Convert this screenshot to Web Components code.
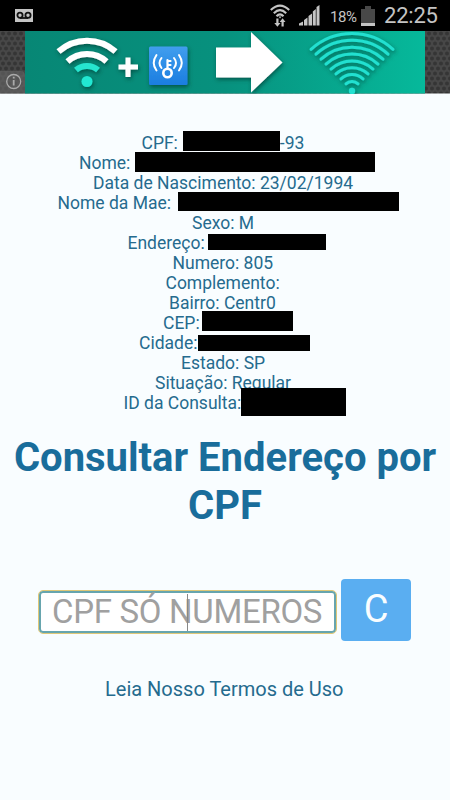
<!DOCTYPE html>
<html lang="pt-BR">
<head>
<meta charset="utf-8">
<meta name="viewport" content="width=device-width, initial-scale=1">
<title>Consultar Endereço por CPF</title>
<style>
    body {
        margin: 0;
        background: #f9fdff;
        font-family: Roboto, "Liberation Sans", sans-serif;
        color: #256b8e;
    }
</style>
</head>
<body>
<consulta-app></consulta-app>

<script>
// Barra de status do telefone
customElements.define('status-bar', class extends HTMLElement {
    connectedCallback() {
        this.attachShadow({mode: 'open'});
        this.shadowRoot.innerHTML = `
        <style>
            :host {
                display: flex;
                align-items: center;
                box-sizing: border-box;
                height: 31px;
                padding: 0 12px 0 15px;
                background: #000;
                color: #c4c4c4;
            }
            svg { display: block; }
            .espaco { flex: 1; }
            .wifi { margin-right: 9px; }
            .sinal { margin-right: 10px; }
            .carga { font-size: 15px; letter-spacing: -.4px; padding-top: 2px; width: 27px; margin-right: 4px; white-space: nowrap; }
            .bateria { margin-right: 9px; }
            .hora { font-size: 22px; width: 54px; letter-spacing: -.2px; white-space: nowrap; }
        </style>
        <svg width="18" height="13" viewBox="0 0 18 13">
            <path fill="#c4c4c4" d="M0 0h18v13H0z"/>
            <g fill="none" stroke="#111" stroke-width="1.8">
                <circle cx="5" cy="6.3" r="2.6"/><circle cx="13" cy="6.3" r="2.6"/>
                <path d="M5 9h8"/>
            </g>
        </svg>
        <span class="espaco"></span>
        <svg class="wifi" width="20" height="23" viewBox="0 0 20 23">
            <g fill="none" stroke="#c4c4c4" stroke-width="2.1">
                <path d="M.8 6Q10-2.8 19.200 6M3.800 9.300Q10 3 16.200 9.300M6.500 12.300Q10 8.500 13.500 12.300"/>
            </g>
            <path fill="#c4c4c4" d="M8.500 12.500h3L10 14.500zM6.300 14.500h2.200v4.500h2L7.400 22.800 4.300 19h2zM11.500 22.500v-4.500H9.700l2.900-3.700 2.900 3.700h-1.800v4.500z"/>
        </svg>
        <svg class="sinal" width="21" height="21" viewBox="0 0 21 21">
            <path fill="#c4c4c4" d="M0 20.500v-2l4-2v4zM5 20.500v-5.500l3.500-2.500v8zM9.500 20.500V11l3.500-2.500v12zM13.800 20.500V6.500l3-2.500v16.500zM17.500 20.500V2l3-2v20.500z"/>
        </svg>
        <span class="carga">18%</span>
        <svg class="bateria" width="14" height="20" viewBox="0 0 14 20">
            <path fill="#484848" d="M4 0h6v3h4v17H0V3h4z"/>
            <path fill="#c4c4c4" d="M0 17h14v3H0z"/>
        </svg>
        <span class="hora">22:25</span>`;
    }
});

// Banner do anuncio
customElements.define('wifi-banner', class extends HTMLElement {
    connectedCallback() {
        this.attachShadow({mode: 'open'});
        // oito arcos, do maior para o menor
        let arcos = '';
        for (let i = 0; i < 8; i++) {
            const meio = 41 - i * 5;
            const y = 18.300 + i * 4.930;
            const topo = 2.500 + i * 6.850;
            const s = y - topo;
            const r = (meio * meio + s * s) / (2 * s);
            arcos += `<path d="M${352 - meio} ${y}A${r} ${r} 0 0 1 ${352 + meio} ${y}"/>`;
        }
        this.shadowRoot.innerHTML = `
        <style>
            :host { display: block; height: 62px; }
            svg { display: block; }
        </style>
        <svg width="450" height="63" viewBox="0 0 450 63">
            <defs>
                <pattern id="malha" width="6" height="10" patternUnits="userSpaceOnUse">
                    <path fill="#474747" d="M0 0h6v10H0z"/>
                    <g fill="#353535"><circle cx="3" cy="2.500" r="2"/><circle cx="0" cy="7.500" r="2"/><circle cx="6" cy="7.500" r="2"/></g>
                </pattern>
                <linearGradient id="verde">
                    <stop offset="0" stop-color="#078775"/>
                    <stop offset=".5" stop-color="#07917e"/>
                    <stop offset="1" stop-color="#06b99b"/>
                </linearGradient>
                <linearGradient id="azul" x2="0" y2="1">
                    <stop offset="0" stop-color="#409eee"/>
                    <stop offset="1" stop-color="#1b7de0"/>
                </linearGradient>
                <filter id="sombra" x="-20%" y="-20%" width="140%" height="150%">
                    <feDropShadow dx="1" dy="2" stdDeviation="2" flood-color="#003c36" flood-opacity=".7"/>
                </filter>
            </defs>
            <path fill="url(#malha)" d="M0 0h450v62.500H0z"/>
            <path fill="url(#verde)" d="M25 0h400v62.500H25z"/>
            <path fill="#666" fill-opacity=".65" d="M0 40h20q5 0 5 5v17.500H0z"/>
            <g fill="none" stroke="#aaa" stroke-width="1.300">
                <circle cx="13.700" cy="50.500" r="7"/><path stroke-width="1.800" d="M13.700 49v5.500M13.700 45.800v1.800"/>
            </g>
            <g filter="url(#sombra)">
                <g fill="none" stroke="#fff" stroke-width="6">
                    <path d="M58.500 20.500A43 43 0 0 1 115.500 20.500"/>
                    <path d="M67.500 30.500A29 29 0 0 1 106.500 30.500"/>
                    <path stroke="#27e5cf" d="M76 39A17 17 0 0 1 98 39"/>
                </g>
                <circle cx="87" cy="50.500" r="5.500" fill="#20e8d2"/>
                <path fill="#fff" d="M125.500 26.500h5v7h7.500v5h-7.500v7.500h-5V38.500h-7v-5h7z"/>
            </g>
            <g filter="url(#sombra)"><rect x="149" y="15.500" width="38.500" height="38.500" rx="1.500" fill="url(#azul)"/></g>
            <g fill="none" stroke="#fff" stroke-width="2" stroke-linecap="round">
                <circle cx="167.500" cy="42" r="4.200" stroke-width="2.600"/>
                <path stroke-width="2.200" d="M167.500 37V29M168 30h2.500M168 34h2.500"/>
                <path d="M161.500 27q-4 5 0 10M156.500 24q-5.500 8 0 15.500M174 27q4 5 0 10M179 24q5.500 8 0 15.500"/>
            </g>
            <g filter="url(#sombra)"><path fill="#fff" d="M216 16.500h35V1l31.500 30.500L251 61.500V46.500h-35z"/></g>
            <g filter="url(#sombra)">
                <g fill="none" stroke="#21e0d0" stroke-width="3" stroke-linecap="round">${arcos}</g>
                <circle cx="352" cy="60" r="3.200" fill="#21e0d0"/>
            </g>
        </svg>`;
    }
});

// Uma linha do resultado. "x" e onde o texto comeca, "vao" o espaco antes do fim
// e "tarja" (x y largura altura) cobre o valor oculto, em relacao a linha
customElements.define('dado-linha', class extends HTMLElement {
    connectedCallback() {
        const x = this.getAttribute('x');
        const tarja = this.getAttribute('tarja');
        this.attachShadow({mode: 'open'});
        this.shadowRoot.innerHTML = `
        <style>
            :host {
                display: flex;
                position: relative;
                height: 20px;
                line-height: 20px;
                font-size: 17.500px;
                padding-left: ${x}px;
                white-space: pre;
            }
            .tarja { position: absolute; background: #000; }
            ::slotted([slot="fim"]) { margin-left: ${this.getAttribute('vao') || 0}px; }
        </style>
        <slot></slot>
        <slot name="fim"></slot>`;
        if (tarja) {
            const [l, t, w, h] = tarja.split(' ');
            const div = document.createElement('div');
            div.className = 'tarja';
            div.style.cssText = `left:${l}px;top:${t}px;width:${w}px;height:${h}px`;
            this.shadowRoot.appendChild(div);
        }
    }
});

// Campo do CPF com o cursor
customElements.define('cpf-campo', class extends HTMLElement {
    connectedCallback() {
        this.attachShadow({mode: 'open'});
        this.shadowRoot.innerHTML = `
        <style>
            :host {
                display: block;
                position: relative;
                box-sizing: border-box;
                width: 297px;
                height: 42px;
                border: 2px solid #67a5ae;
                border-radius: 4px;
                outline: 1px solid #dfc878;
                background: #fff;
                color: #a0a0a0;
                font-size: 33px;
                letter-spacing: -.3px;
                line-height: 37px;
                padding-left: 11px;
                white-space: nowrap;
            }
            .cursor { position: absolute; left: 146px; top: 1px; width: 1px; height: 37px; background: #888; }
        </style>
        <slot></slot><div class="cursor"></div>`;
    }
});

customElements.define('botao-consulta', class extends HTMLElement {
    connectedCallback() {
        this.attachShadow({mode: 'open'});
        this.shadowRoot.innerHTML = `
        <style>
            :host {
                display: flex;
                align-items: center;
                justify-content: center;
                box-sizing: border-box;
                width: 70px;
                height: 62px;
                padding-bottom: 2px;
                border-radius: 4px;
                background: #5aaef1;
                color: #f9fdff;
                font-size: 38px;
            }
        </style>
        <slot></slot>`;
    }
});

customElements.define('consulta-app', class extends HTMLElement {
    connectedCallback() {
        this.attachShadow({mode: 'open'});
        this.shadowRoot.innerHTML = `
        <style>
            :host { display: block; height: 800px; overflow: hidden; }
            .dados { padding-top: 40px; }
            h1 {
                margin: 21px 0 0;
                font-size: 40px;
                line-height: 48px;
                font-weight: 700;
                color: #196d9b;
                text-align: center;
                white-space: nowrap;
            }
            form { display: flex; align-items: center; gap: 5px; margin: 49px 0 0 39px; }
            cpf-campo { margin-top: 4px; }
            .termos { margin: 36px 0 0 105px; font-size: 20px; line-height: 24px; white-space: nowrap; }
        </style>
        <status-bar></status-bar>
        <wifi-banner></wifi-banner>
        <div class="dados">
            <dado-linha x="141.500" vao="102" tarja="183 -2 97 20"><span>CPF:</span><span slot="fim">-93</span></dado-linha>
            <dado-linha x="79" tarja="135 -1 240 20"><span>Nome:</span></dado-linha>
            <dado-linha x="93"><span>Data de Nascimento: 23/02/1994</span></dado-linha>
            <dado-linha x="57.500" tarja="178 -1 221 19"><span>Nome da Mae:</span></dado-linha>
            <dado-linha x="192"><span>Sexo: M</span></dado-linha>
            <dado-linha x="127.500" tarja="208 1 118 16"><span>Endereço:</span></dado-linha>
            <dado-linha x="172.500"><span>Numero: 805</span></dado-linha>
            <dado-linha x="165.500"><span>Complemento:</span></dado-linha>
            <dado-linha x="169"><span>Bairro: Centr0</span></dado-linha>
            <dado-linha x="163" tarja="202 -2 91 20"><span>CEP:</span></dado-linha>
            <dado-linha x="139" tarja="198 2 112 16"><span>Cidade:</span></dado-linha>
            <dado-linha x="181"><span>Estado: SP</span></dado-linha>
            <dado-linha x="155"><span>Situação: Regular</span></dado-linha>
            <dado-linha x="123.500" tarja="241 -5 105 28"><span>ID da Consulta:</span></dado-linha>
        </div>
        <h1>Consultar Endereço por<br>CPF</h1>
        <form>
            <cpf-campo>CPF SÓ NUMEROS</cpf-campo>
            <botao-consulta>C</botao-consulta>
        </form>
        <div class="termos">Leia Nosso Termos de Uso</div>`;
    }
});
</script>
</body>
</html>
